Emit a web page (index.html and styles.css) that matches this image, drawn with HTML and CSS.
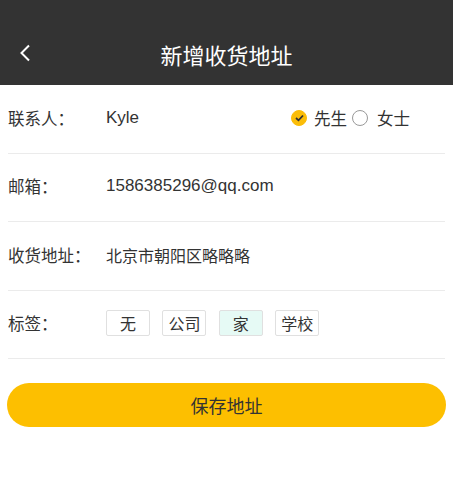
FILE: index.html
```html
<!DOCTYPE html>
<html lang="zh">
<head>
<meta charset="utf-8">
<link rel="stylesheet" href="styles.css">
</head>
<body>
<header class="nav">
  <svg class="back" width="12" height="18" viewBox="0 0 12 18"><path d="M10 1.5 L2.5 9 L10 16.5" fill="none" stroke="#fff" stroke-width="2"/></svg>
  <h1 class="title">新增收货地址</h1>
</header>
<main class="form">
  <div class="row">
    <span class="label">联系人：</span>
    <span class="value latin">Kyle</span>
    <div class="gender">
      <span class="radio checked"><svg width="9" height="8" viewBox="0 0 9 8"><path d="M1 4 L3.5 6.3 L8 1.5" fill="none" stroke="#333" stroke-width="1.8"/></svg></span>
      <span class="opt">先生</span>
      <span class="radio second"></span>
      <span class="opt far">女士</span>
    </div>
  </div>
  <div class="row">
    <span class="label">邮箱：</span>
    <span class="value latin">1586385296@qq.com</span>
  </div>
  <div class="row">
    <span class="label">收货地址：</span>
    <span class="value">北京市朝阳区略略略</span>
  </div>
  <div class="row">
    <span class="label">标签：</span>
    <div class="tags">
      <span class="tag">无</span>
      <span class="tag">公司</span>
      <span class="tag active">家</span>
      <span class="tag">学校</span>
    </div>
  </div>
  <button class="save">保存地址</button>
</main>
</body>
</html>
```
FILE: styles.css
```css
* { box-sizing: border-box; }
body {
  margin: 0;
  background: #fff;
  font-family: "Liberation Sans", "Noto Sans CJK SC", sans-serif;
  color: #333;
}
.nav {
  height: 85px;
  background: #333333;
  display: flex;
  align-items: center;
  justify-content: center;
  position: relative;
  padding-top: 22px;
}
.back {
  position: absolute;
  left: 19px;
  top: 44px;
}
.title {
  margin: 0;
  font-size: 22px;
  font-weight: 400;
  color: #fff;
  font-family: "Noto Sans CJK SC", sans-serif;
}
.form {
  padding: 0 8px;
}
.row {
  height: 68.5px;
  border-bottom: 1px solid #ebebeb;
  display: flex;
  align-items: center;
  font-size: 16px;
  padding-bottom: 2px;
}
.label {
  width: 98px;
  flex: none;
  color: #333;
  font-size: 16.5px;
}
.value {
  color: #333;
  flex: 1;
}
.value.latin {
  font-size: 17px;
}
.gender {
  display: flex;
  align-items: center;
  margin-right: 35px;
}
.radio {
  width: 16px;
  height: 16px;
  border-radius: 50%;
  border: 1px solid #999;
  display: flex;
  align-items: center;
  justify-content: center;
}
.radio.checked {
  background: #fbbd08;
  border-color: #fbbd08;
}
.radio.second {
  margin-left: 5px;
}
.opt {
  margin-left: 7px;
  font-size: 16.5px;
}
.opt.far {
  margin-left: 9px;
}
.tags {
  display: flex;
  gap: 12.4px;
}
.tag {
  width: 44px;
  height: 26px;
  border: 1px solid #e0e0e0;
  border-radius: 2px;
  display: flex;
  align-items: center;
  justify-content: center;
  font-size: 16px;
}
.tag.active {
  background: #e6faf5;
}
.save {
  display: block;
  width: calc(100% + 2px);
  margin: 24px -1px 0;
  height: 44px;
  border: none;
  border-radius: 22px;
  background: #fdbf00;
  color: #333;
  font-size: 18px;
  font-family: "Noto Sans CJK SC", sans-serif;
}
```
